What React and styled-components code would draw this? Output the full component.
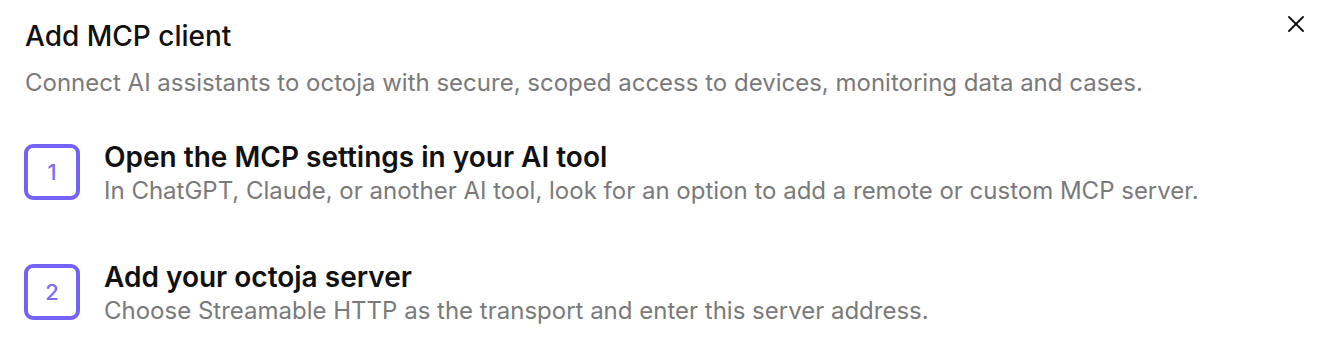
import React from "react";
import styled, { createGlobalStyle } from "styled-components";
import { X } from "lucide-react";

const GlobalStyle = createGlobalStyle`
  body {
    margin: 0;
    background: #ffffff;
    font-family: Inter, "Noto Sans", sans-serif;
  }
`;

const Dialog = styled.div`
  position: relative;
  width: 1328px;
  height: 347px;
  box-sizing: border-box;
  padding: 18px 25px 0 25px;
  background: #fff;
`;

const Title = styled.h2`
  margin: 0;
  font-size: 28px;
  font-weight: 500;
  line-height: 36px;
  color: #111;
`;

const Description = styled.p`
  margin: 13px 0 0 0;
  font-size: 24px;
  line-height: 32px;
  color: #7a7a7a;
`;

const CloseButton = styled.button`
  position: absolute;
  top: 10px;
  right: 18px;
  border: none;
  background: none;
  padding: 0;
  cursor: pointer;
  color: #111;
  display: flex;
`;

const Steps = styled.ol`
  list-style: none;
  margin: 41px 0 0 0;
  padding: 0;
  display: flex;
  flex-direction: column;
  gap: 52px;
`;

const Step = styled.li`
  display: flex;
  flex-direction: row;
  align-items: flex-start;
  gap: 24px;
`;

const StepNumber = styled.div`
  flex: none;
  width: 56px;
  height: 56px;
  margin-top: 4px;
  margin-left: -1px;
  box-sizing: border-box;
  border: 4px solid #7564f4;
  border-radius: 9px;
  display: flex;
  align-items: center;
  justify-content: center;
  font-size: 22px;
  font-weight: 500;
  color: #7b6cf2;
`;

const StepText = styled.div`
  display: flex;
  flex-direction: column;
  .title {
    font-size: 28px;
    font-weight: 600;
    line-height: 34px;
    color: #111;
  }
  .desc {
    font-size: 24px;
    line-height: 34px;
    color: #7a7a7a;
  }
`;

const steps = [
  {
    title: "Open the MCP settings in your AI tool",
    desc: "In ChatGPT, Claude, or another AI tool, look for an option to add a remote or custom MCP server.",
  },
  {
    title: "Add your octoja server",
    desc: "Choose Streamable HTTP as the transport and enter this server address.",
  },
];

const App = () => {
  return (
    <>
      <GlobalStyle />
      <Dialog>
        <Title>Add MCP client</Title>
        <Description>
          Connect AI assistants to octoja with secure, scoped access to devices, monitoring data and cases.
        </Description>
        <CloseButton aria-label="Close">
          <X size={28} strokeWidth={1.6} />
        </CloseButton>
        <Steps>
          {steps.map((s, i) => (
            <Step key={i}>
              <StepNumber>{i + 1}</StepNumber>
              <StepText>
                <span className="title">{s.title}</span>
                <span className="desc">{s.desc}</span>
              </StepText>
            </Step>
          ))}
        </Steps>
      </Dialog>
    </>
  );
};

export default App;
